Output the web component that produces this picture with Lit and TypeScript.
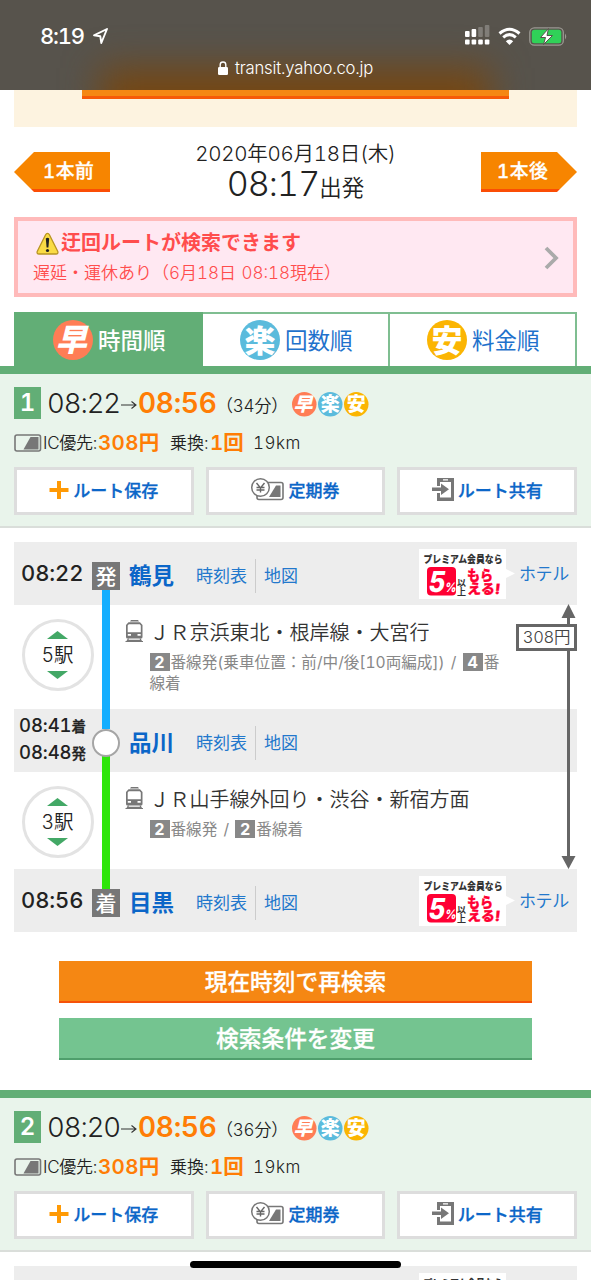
import { LitElement, html, css, svg, nothing } from "lit";
import { customElement, property } from "lit/decorators.js";

const base = css`
  * { box-sizing: border-box; }
  svg { display: block; flex: none; overflow: visible; }
  svg text { font-family: "Inter", "Noto Sans CJK JP", sans-serif; }
`;

@customElement("mark-icon")
class MarkIcon extends LitElement {
  @property() kind = "早";
  @property({ type: Number }) size = 40;
  static styles = [base, css`
    :host { display: block; flex: none; }
    text { font-weight: 900; fill: #fff; text-anchor: middle; }
  `];
  render() {
    const fill = ({ 早: "#ff7d55", 楽: "#5bbbdc", 安: "#fbb503" } as Record<string, string>)[this.kind];
    return html`<svg width=${this.size} height=${this.size} viewBox="0 0 40 40">
      <circle cx="20" cy="20" r="20" fill=${fill}></circle>
      <text x="20" y="31.500" font-size="31" transform=${this.kind === "早" ? "translate(6 0) skewX(-14)" : ""}>${this.kind}</text>
    </svg>`;
  }
}

@customElement("hotel-promo")
class HotelPromo extends LitElement {
  static styles = [base, css`
    :host { display: flex; align-items: center; }
    .link { color: #2378cc; font-size: 17px; line-height: 24px; margin-left: 3px; letter-spacing: -0.3px; margin-top: 1px; }
    .k { font-weight: 900; fill: #333; }
    .r { font-weight: 900; fill: #ff0033; stroke: #ff0033; stroke-width: 0.3; }
    .w { font-weight: 800; fill: #fff; }
  `];
  render() {
    return html`<svg width="97" height="50" viewBox="0 0 97 50">
      <path d="M0 0H87V20L96 24.500L87 29V50H0Z" fill="#fff"></path>
      <text class="k" x="4.500" y="14" font-size="10.500" textLength="79" lengthAdjust="spacingAndGlyphs">プレミアム会員なら</text>
      <rect x="8" y="18" width="29" height="28.500" rx="4" fill="#ff0033"></rect>
      <text class="w" x="0" y="0" font-size="29" transform="translate(8.500 42.500) skewX(-10) scale(.88 1)">5</text>
      <text class="w" x="0" y="0" font-size="13" transform="translate(25.500 42.500) skewX(-10) scale(.85 1)">%</text>
      <text class="k" x="38" y="37" font-size="9" style="font-weight:700">以</text>
      <text class="k" x="38" y="45.500" font-size="9" style="font-weight:700">上</text>
      <text class="r" x="48" y="30.500" font-size="14" textLength="26" lengthAdjust="spacingAndGlyphs">もら</text>
      <text class="r" x="0" y="0" font-size="14" transform="translate(48 44.500) skewX(-6)">える!</text>
    </svg><span class="link">ホテル</span>`;
  }
}

@customElement("route-summary")
class RouteSummary extends LitElement {
  @property({ type: Number }) no = 1;
  @property() from = "";
  @property() to = "";
  @property() mins = "";
  static styles = [base, css`
    :host { display: block; height: 162px; border-top: 8px solid #62ae76; border-bottom: 2px solid #dadeda; background: #e9f4eb; padding: 13px 14px 0; }
    .times { display: flex; height: 32px; align-items: center; white-space: nowrap; line-height: 32px; }
    .no { width: 27px; height: 32px; background: #62ae76; color: #fff; font-size: 24px; font-weight: 600; text-align: center; }
    .from { width: 73px; margin-left: 6px; font-size: 27.500px; letter-spacing: -1.100px; font-weight: 320; }
    .arr { width: 18px; }
    .to { width: 79px; font-size: 28px; letter-spacing: -0.300px; font-weight: 600; color: #ff7d05; }
    .mins { width: 75px; font-size: 17px; margin-top: 5px; font-weight: 350; text-indent: -1px; letter-spacing: -0.200px; }
    .marks { display: flex; gap: 1.500px; margin-top: 2px; }
    .fare { display: flex; height: 26px; margin-top: 11px; line-height: 26px; font-size: 17px; white-space: nowrap; align-items: center; font-weight: 350; }
    .fare b { color: #ff7d05; font-size: 20.500px; font-weight: 600; }
    .card { margin-right: 1px; }
    .ic { width: 55px; letter-spacing: -0.300px; }
    .yen { width: 72px; letter-spacing: 0.300px; }
    .tr { width: 40px; }
    .cnt { width: 43px; }
    .km { letter-spacing: 0.500px; }
    .btns { display: grid; grid-template-columns: 1fr 1fr 1fr; gap: 12px; margin-top: 11px; }
    .btn { height: 48px; border: 3px solid #ddd; background: #fff; display: flex; align-items: center; justify-content: center; gap: 4px; color: #0b66c8; font-size: 17px; font-weight: 500; white-space: nowrap; padding-bottom: 3px; }
    .btn span { -webkit-text-stroke: 0.300px #0b66c8; }
  `];
  render() {
    return html`
      <div class="times">
        <span class="no">${this.no}</span><span class="from">${this.from}</span>
        <span class="arr"><svg width="17" height="12" viewBox="0 0 17 12"><path d="M1 8H16M11.500 4.500L16 8L11.500 11.500" fill="none" stroke="#333" stroke-width="1.100"></path></svg></span>
        <span class="to">${this.to}</span><span class="mins">（${this.mins}分）</span>
        <span class="marks"><mark-icon kind="早" size="24.500"></mark-icon><mark-icon kind="楽" size="24.500"></mark-icon><mark-icon kind="安" size="24.500"></mark-icon></span>
      </div>
      <div class="fare">
        <svg class="card" width="28" height="18" viewBox="0 0 28 18"><rect x="1" y="1" width="25.500" height="16" rx="2" fill="none" stroke="#777" stroke-width="1.600"></rect><path d="M9.500 15.500L16.500 3H24.500V15.500Z" fill="#777"></path></svg>
        <span class="ic">IC優先:</span><b class="yen">308円</b><span class="tr">乗換:</span><b class="cnt">1回</b><span class="km">19km</span>
      </div>
      <div class="btns">
        <div class="btn"><svg width="20" height="18" viewBox="0 0 20 18"><path d="M10 0V18M0.500 9H19.500" stroke="#ff9a05" stroke-width="4"></path></svg><span>ルート保存</span></div>
        <div class="btn"><svg width="33" height="23" viewBox="0 0 33 23"><rect x="6" y="4.500" width="26" height="17" rx="2" fill="#fff" stroke="#777" stroke-width="1.600"></rect><path d="M18 19L25 7.500H29.500V19Z" fill="#777"></path><circle cx="9.500" cy="9.500" r="8.800" fill="#fff" stroke="#777" stroke-width="1.500"></circle><path d="M5.500 5L9.500 10L13.500 5M9.500 10V14.500M5.500 9.500H13.500M5.500 12H13.500" fill="none" stroke="#666" stroke-width="1.400"></path></svg><span>定期券</span></div>
        <div class="btn"><svg width="22" height="23" viewBox="0 0 22 23"><path fill-rule="evenodd" d="M5 0H22V23H5V15H8V19.500H19V4H8V8H5ZM11 1.300V2.600H16V1.300Z" fill="#777"></path><path d="M0 9.500H9V5.500L17 11.300L9 17V13H0Z" fill="#777"></path></svg><span>ルート共有</span></div>
      </div>`;
  }
}

@customElement("station-row")
class StationRow extends LitElement {
  @property() name = "";
  @property() time = "";
  @property() mark = "";
  @property() arrive = "";
  @property() leave = "";
  @property({ type: Boolean }) hotel = false;
  static styles = [base, css`
    :host { display: flex; height: 63px; background: #ededed; align-items: center; white-space: nowrap; }
    .time { width: 78px; padding-left: 7px; font-size: 22px; line-height: 30px; font-weight: 500; letter-spacing: -0.100px; margin-top: -2px; }
    .pair { width: 78px; padding-left: 5px; font-size: 18.500px; line-height: 27px; font-weight: 500; margin-top: -3px; }
    .pair div { display: flex; align-items: baseline; height: 27px; letter-spacing: -0.100px; }
    .pair small { font-size: 14.500px; letter-spacing: 0; font-weight: 500; -webkit-text-stroke: 0.300px #222; }
    .node { width: 28px; height: 28px; position: relative; z-index: 2; background: #777; color: #fff; font-size: 21px; line-height: 29px; text-align: center; margin-top: 4px; font-weight: 500; }
    .dot { width: 28px; height: 28px; position: relative; z-index: 2; border: 2.500px solid #a5a5a5; background: #fff; border-radius: 50%; margin-top: 4px; }
    .name { width: 67px; margin-left: 9px; font-size: 22.500px; line-height: 30px; font-weight: 600; color: #0b66c8; margin-top: 4px; }
    .a { color: #2378cc; font-size: 17px; line-height: 34px; margin-top: 4px; }
    .a.t { width: 60px; border-right: 1.500px solid #ccc; }
    .a.m { width: 41px; margin-left: 8px; }
    hotel-promo { margin-left: auto; margin-right: 8px; }
  `];
  render() {
    return html`${this.time ? html`<span class="time">${this.time}</span>` : html`<div class="pair"><div>${this.arrive}<small>着</small></div><div>${this.leave}<small>発</small></div></div>`}
      ${this.mark ? html`<span class="node">${this.mark}</span>` : html`<span class="dot"></span>`}
      <span class="name">${this.name}</span><span class="a t">時刻表</span><span class="a m">地図</span>
      ${this.hotel ? html`<hotel-promo></hotel-promo>` : nothing}`;
  }
}

@customElement("ride-row")
class RideRow extends LitElement {
  @property({ type: Number }) stops = 0;
  @property() line = "";
  @property({ attribute: false }) notes: (string | number)[] = [];
  @property() color = "";
  static styles = [base, css`
    :host { display: flex; position: relative; }
    .stops { width: 72px; height: 72px; margin: 14px 0 0 7.500px; flex: none; border: 3px solid #e3e3e3; border-radius: 50%; display: flex; flex-direction: column; align-items: center; justify-content: center; font-size: 19.500px; line-height: 32px; font-weight: 350; }
    .rail { position: absolute; left: 87.500px; width: 8.500px; top: -16px; bottom: -20px; z-index: 1; }
    .train { margin: 15px 0 0 31px; }
    .info { margin-left: 6px; padding-top: 12px; width: 360px; }
    .line { font-size: 20px; line-height: 30px; white-space: nowrap; color: #333; font-weight: 350; padding-top: 1px; }
    .notes { width: 354px; font-size: 15.600px; line-height: 21px; color: #888; margin-top: 4px; word-spacing: 2px; font-weight: 370; }
    .n { display: inline-block; width: 20px; height: 18px; margin-right: 1px; background: #888; color: #fff; font-weight: 700; text-align: center; line-height: 18px; font-size: 16px; }
  `];
  render() {
    return html`<div class="rail" style="background:${this.color}"></div>
      <div class="stops">
        <svg width="21" height="8" viewBox="0 0 21 8"><path d="M0 8L10.500 0L21 8Z" fill="#43a866"></path></svg>
        <span>${this.stops}駅</span>
        <svg width="21" height="8" viewBox="0 0 21 8"><path d="M0 0L10.500 8L21 0Z" fill="#43a866"></path></svg>
      </div>
      <svg class="train" width="19" height="23" viewBox="0 0 19 23"><path fill-rule="evenodd" d="M6 0H13L14 1.500H5ZM3.500 2.300H15L17.500 5V17Q17.500 18.500 16 18.500H2.500Q1 18.500 1 17V5ZM3.800 4.200L2.700 5.500V12.300H15.800V5.500L14.700 4.200ZM2.800 14V15.800H6V14ZM12.500 14V15.800H15.700V14Z" fill="#777"></path><path d="M3.500 18.500L2.500 20.300H16L15 18.500M0.500 21.500H18" fill="none" stroke="#777" stroke-width="1.200"></path></svg>
      <div class="info"><div class="line">${this.line}</div>
      <div class="notes">${this.notes.map((n) => (typeof n === "number" ? html`<span class="n">${n}</span>` : n))}</div></div>`;
  }
}

@customElement("app-root")
class AppRoot extends LitElement {
  static styles = [base, css`
    :host { display: block; position: relative; width: 591px; height: 1280px; overflow: hidden; background: #fff; color: #222; font-family: "Inter", "Noto Sans CJK JP", sans-serif; font-variant-numeric: tabular-nums; }
    .status { position: relative; isolation: isolate; overflow: hidden; height: 90px; color: #fff; background: #57534c; }
    .status::before { content: ""; position: absolute; z-index: -1; left: 100px; right: 100px; top: 68px; height: 80px; background: #754713; filter: blur(18px); }
    .top { display: flex; align-items: center; height: 54px; padding: 18px 24px 0 40px; }
    .clock { font-size: 22px; font-weight: 500; line-height: 30px; letter-spacing: -1.200px; width: 53px; white-space: nowrap; }
    .sys { margin-left: auto; display: flex; gap: 8px; align-items: center; }
    .url { display: flex; justify-content: center; align-items: center; gap: 7px; font-size: 16.700px; line-height: 28px; letter-spacing: -0.200px; font-weight: 350; }
    .cream { margin: 0 14px; height: 37px; background: #fdf3e0; padding: 0 68px; }
    .strip { height: 9px; background: #f58713; border-bottom: 3px solid #f65a08; }
    .nav { display: flex; justify-content: space-between; height: 90px; padding: 0 14px; }
    .arrow { width: 96px; height: 40px; margin-top: 25px; color: #fff; font-size: 18.800px; line-height: 40px; letter-spacing: 0.500px; font-weight: 500; -webkit-text-stroke: 0.300px #fff; background: linear-gradient(#f78500 37.500px, #fb4d05 37.500px); }
    .prev { clip-path: polygon(0 50%, 20px 0, 100% 0, 100% 100%, 20px 100%); padding-left: 29px; }
    .next { clip-path: polygon(0 0, 76px 0, 100% 50%, 76px 100%, 0 100%); padding-left: 16px; }
    .when { text-align: center; padding-top: 12px; white-space: nowrap; }
    .date { font-size: 20.500px; letter-spacing: -0.250px; line-height: 30px; font-weight: 340; }
    .dep { font-size: 34px; line-height: 30px; font-weight: 320; letter-spacing: -0.900px; }
    .dep small { font-size: 22.500px; letter-spacing: 0; font-weight: 350; }
    .alert { margin: 0 14px; height: 80px; border: 4px solid #ffbaba; background: #ffe8f2; display: flex; align-items: center; justify-content: space-between; padding: 2px 14px 0 15px; color: #ff4d4d; }
    .alert .h { display: flex; gap: 2px; padding-left: 3px; font-size: 20px; line-height: 28px; font-weight: 600; align-items: center; }
    .alert .s { font-size: 17px; line-height: 28px; padding-top: 2px; white-space: nowrap; font-weight: 350; word-spacing: 1px; }
    .tabs { display: grid; grid-template-columns: 189px 187px 187px; margin: 15px 14px 0; height: 54px; }
    .tab { display: flex; align-items: center; gap: 5px; padding: 0 0 0 37px; border-top: 2px solid #7fbe91; border-right: 2px solid #7fbe91; color: #1f72cc; font-size: 22.500px; white-space: nowrap; }
    .tab span { margin-top: -3px; }
    .tab.on { background: #62ae76; color: #fff; border-color: #62ae76; padding-left: 39px; font-weight: 500; }
    .detail { margin: 14px 14px 0; position: relative; }
    .r1 { height: 104px; }
    .r2 { height: 97px; }
    .span { position: absolute; right: 0; top: 62px; z-index: 3; }
    .price { position: absolute; right: 0; top: 82px; z-index: 4; width: 61px; height: 27px; border: 3px solid #666; background: #fff; font-size: 16.500px; letter-spacing: -0.300px; line-height: 20px; text-align: center; color: #444; white-space: nowrap; font-weight: 350; }
    .cta { margin: 29px 59px 0; height: 42px; background: #f58713; border-bottom: 2.500px solid #f65209; color: #fff; text-align: center; font-size: 22.700px; line-height: 41px; font-weight: 500; -webkit-text-stroke: 0.300px #fff; }
    .cta.g { margin-top: 15px; margin-bottom: 30px; background: #74c490; border-color: #4f9f6c; }
    .home { position: absolute; left: 190px; bottom: 12px; width: 211px; height: 7px; border-radius: 4px; background: #000; z-index: 9; }
  `];
  render() {
    const bar = (x: number, y: number, h: number, o = 1) => svg`<rect x=${x} y=${y} width="4.600" height=${h} rx="1" fill="#fff" opacity=${o}></rect>`;
    return html`
      <div class="status">
        <div class="top">
          <span class="clock">8:19</span>
          <svg width="15" height="16" viewBox="0 0 15 16"><path d="M14 1L1 7.300L7.300 8.300L8.300 15Z" fill="none" stroke="#fff" stroke-width="1.900" stroke-linejoin="round"></path></svg>
          <div class="sys">
            <svg width="25" height="20" viewBox="0 0 25 20">${bar(0, 5, 6)}${bar(6.6, 3, 8)}${bar(13.2, 1, 10, 0.25)}${bar(19.8, -1, 12, 0.25)}${[0, 6.6, 13.2, 19.8].map((x) => bar(x, 13.500, 5))}</svg>
            <svg width="23" height="17" viewBox="0 0 23 17"><path d="M1.500 5.500Q11.500 -3 21.500 5.500M5.200 9.300Q11.500 4 17.800 9.300" fill="none" stroke="#fff" stroke-width="3"></path><path d="M11.500 17L7.800 13.200Q11.500 10 15.200 13.200Z" fill="#fff"></path></svg>
            <svg width="38" height="19" viewBox="0 0 38 19"><rect x="0.800" y="0.800" width="33.500" height="17.400" rx="4.500" fill="none" stroke="#9b9892" stroke-width="1.300"></rect><rect x="2.800" y="2.800" width="29.500" height="13.400" rx="2.500" fill="#30d158"></rect><path d="M36 6.500Q38.500 9.500 36 12.500Z" fill="#9b9892"></path><path d="M19.500 1.500L11.500 10.500H16.500L14.500 17.500L23.500 8.500H18Z" fill="#fff" stroke="#57534c" stroke-width="1"></path></svg>
          </div>
        </div>
        <div class="url"><svg width="10" height="14" viewBox="0 0 10 14"><rect y="6" width="10" height="8" rx="1.300" fill="#fff"></rect><path d="M2.200 7V3.800a2.800 2.800 0 0 1 5.600 0V7" fill="none" stroke="#fff" stroke-width="1.400"></path></svg><span>transit.yahoo.co.jp</span></div>
      </div>
      <div class="cream"><div class="strip"></div></div>
      <div class="nav">
        <div class="arrow prev">1本前</div>
        <div class="when"><div class="date">2020年06月18日(木)</div><div class="dep">08:17<small>出発</small></div></div>
        <div class="arrow next">1本後</div>
      </div>
      <div class="alert">
        <div><div class="h"><svg width="23" height="23" viewBox="0 0 23 23"><path d="M11.500 1.300Q12.700 1.300 13.400 2.700L21.800 19.500Q22.500 21.800 20 22H3Q0.500 21.800 1.200 19.500L9.600 2.700Q10.300 1.300 11.500 1.300Z" fill="#fadb45" stroke="#b89422" stroke-width="1.300"></path><path d="M9.800 6.500Q11.500 4.800 13.200 6.500L12.400 15.500H10.600Z" fill="#222"></path><circle cx="11.500" cy="18.500" r="1.600" fill="#222"></circle></svg><span>迂回ルートが検索できます</span></div>
        <div class="s">遅延・運休あり（6月18日 08:18現在）</div></div>
        <svg width="15" height="24" viewBox="0 0 15 24"><path d="M2 2L12 12L2 22" fill="none" stroke="#aaa" stroke-width="3.800"></path></svg>
      </div>
      <div class="tabs">
        <div class="tab on"><mark-icon kind="早" size="40"></mark-icon><span>時間順</span></div>
        <div class="tab"><mark-icon kind="楽" size="40"></mark-icon><span>回数順</span></div>
        <div class="tab"><mark-icon kind="安" size="40"></mark-icon><span>料金順</span></div>
      </div>
      <route-summary no="1" from="08:22" to="08:56" mins="34"></route-summary>
      <div class="detail">
        <station-row time="08:22" mark="発" name="鶴見" hotel></station-row>
        <ride-row class="r1" stops="5" line="ＪＲ京浜東北・根岸線・大宮行" color="#14aeff" .notes=${[2, "番線発(乗車位置：前/中/後[10両編成]) / ", 4, "番線着"]}></ride-row>
        <station-row arrive="08:41" leave="08:48" name="品川"></station-row>
        <ride-row class="r2" stops="3" line="ＪＲ山手線外回り・渋谷・新宿方面" color="#2ee60a" .notes=${[2, "番線発 / ", 2, "番線着"]}></ride-row>
        <station-row time="08:56" mark="着" name="目黒" hotel></station-row>
        <svg class="span" width="16" height="265" viewBox="0 0 16 265"><path d="M7.500 10V255" stroke="#666" stroke-width="3"></path><path d="M0.500 14L7.500 0L14.500 14ZM0.500 252L7.500 265L14.500 252Z" fill="#666"></path></svg>
        <div class="price">308円</div>
      </div>
      <div class="cta">現在時刻で再検索</div>
      <div class="cta g">検索条件を変更</div>
      <route-summary no="2" from="08:20" to="08:56" mins="36"></route-summary>
      <div class="detail"><station-row time="08:20" mark="発" name="鶴見" hotel></station-row></div>
      <div class="home"></div>`;
  }
}
